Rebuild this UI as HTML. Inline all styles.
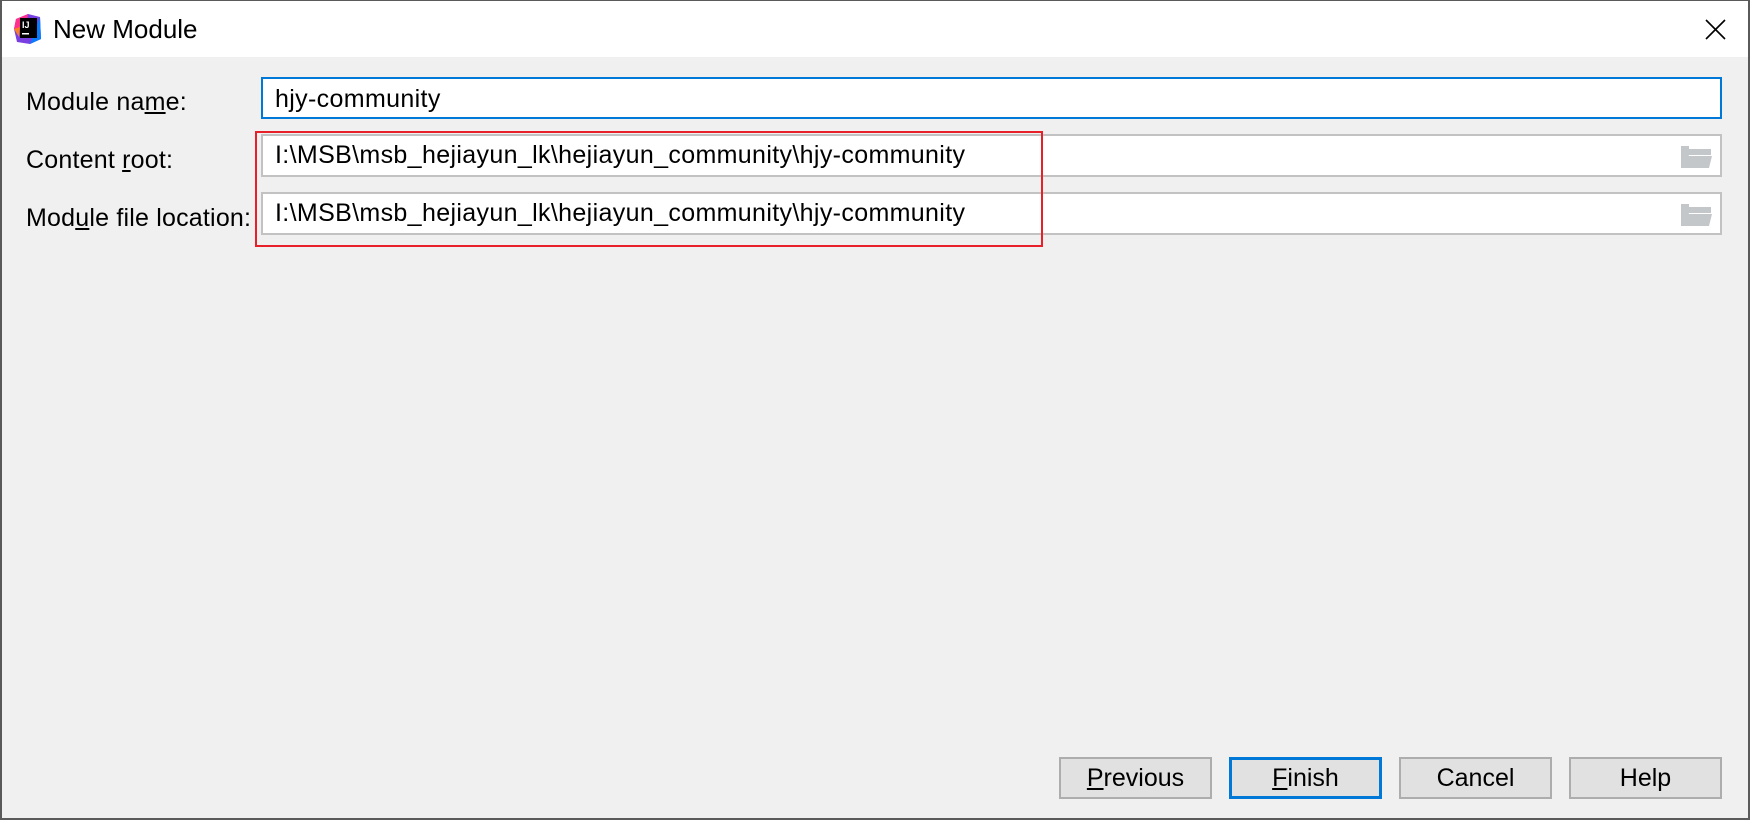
<!DOCTYPE html>
<html><head><meta charset="utf-8"><style>
*{margin:0;padding:0;box-sizing:border-box}
body{width:1750px;height:820px;overflow:hidden;background:#f0f0f0;font-family:"Liberation Sans",sans-serif;color:#000;position:relative}
.frame{position:absolute;left:0;top:0;width:1750px;height:820px;border:2px solid #5a5a5a;border-top-width:1px}
.title{position:absolute;left:2px;top:1px;width:1746px;height:56px;background:#fff}
.t{position:absolute;font-size:26px;white-space:nowrap}
.lbl{position:absolute;font-size:25px;white-space:nowrap;letter-spacing:0.2px}
.f{position:absolute;background:#fff;border:2px solid #c2c2c2}
.f span{position:absolute;left:12px;top:5px;font-size:25px;white-space:nowrap;letter-spacing:0.35px}
.btn{position:absolute;top:757px;height:42px;width:153px;background:#e1e1e1;border:2px solid #adadad;font-size:25px;text-align:center;line-height:38px}
u{text-decoration:underline}
</style></head><body>
<div class="frame"></div>
<div class="title"></div>
<svg style="position:absolute;left:14px;top:13px" width="28" height="32" viewBox="0 0 28 32">
<polygon points="2,6 14,1 26,4 27,26 16,31 3,29 0,16" fill="#7a3fe0"/>
<polygon points="2,6 14,1 12,14 0,16" fill="#ff318c"/>
<polygon points="0,16 6,14 5,24" fill="#fc801d"/>
<polygon points="26,4 27,26 16,31 22,14" fill="#087cfa"/>
<rect x="6" y="5" width="17" height="20" fill="#000"/>
<text x="8" y="15" font-size="9" fill="#fff" font-family="Liberation Sans" font-weight="bold">IJ</text>
<rect x="8" y="20" width="7" height="1.5" fill="#fff"/>
</svg>
<div class="t" style="left:53px;top:14px">New Module</div>
<svg style="position:absolute;left:1705px;top:19px" width="21" height="21"><path d="M1 1L20 20M20 1L1 20" stroke="#000" stroke-width="1.6"/></svg>

<div class="lbl" style="left:26px;top:88px">Module na<u>m</u>e:</div>
<div class="lbl" style="left:26px;top:146px">Content <u>r</u>oot:</div>
<div class="lbl" style="left:26px;top:204px">Mod<u>u</u>le file location:</div>

<div class="f" style="left:261px;top:77px;width:1461px;height:42px;border-color:#0078d7"><span style="top:6px">hjy-community</span></div>
<div class="f" style="left:261px;top:134px;width:1461px;height:43px"><span>I:\MSB\msb_hejiayun_lk\hejiayun_community\hjy-community</span></div>
<div class="f" style="left:261px;top:192px;width:1461px;height:43px"><span>I:\MSB\msb_hejiayun_lk\hejiayun_community\hjy-community</span></div>
<svg style="position:absolute;left:1681px;top:146px" width="31" height="22"><path d="M0 0H8V3H30V9H8L3 22H0Z M6 10H31L28 22H2Z" fill="#c4c7ca"/></svg>
<svg style="position:absolute;left:1681px;top:204px" width="31" height="22"><path d="M0 0H8V3H30V9H8L3 22H0Z M6 10H31L28 22H2Z" fill="#c4c7ca"/></svg>

<div style="position:absolute;left:255px;top:131px;width:788px;height:116px;border:2.5px solid #e8202a"></div>

<div class="btn" style="left:1059px"><u>P</u>revious</div>
<div class="btn" style="left:1229px;border:3px solid #0078d7;line-height:36px"><u>F</u>inish</div>
<div class="btn" style="left:1399px">Cancel</div>
<div class="btn" style="left:1569px">Help</div>
</body></html>
